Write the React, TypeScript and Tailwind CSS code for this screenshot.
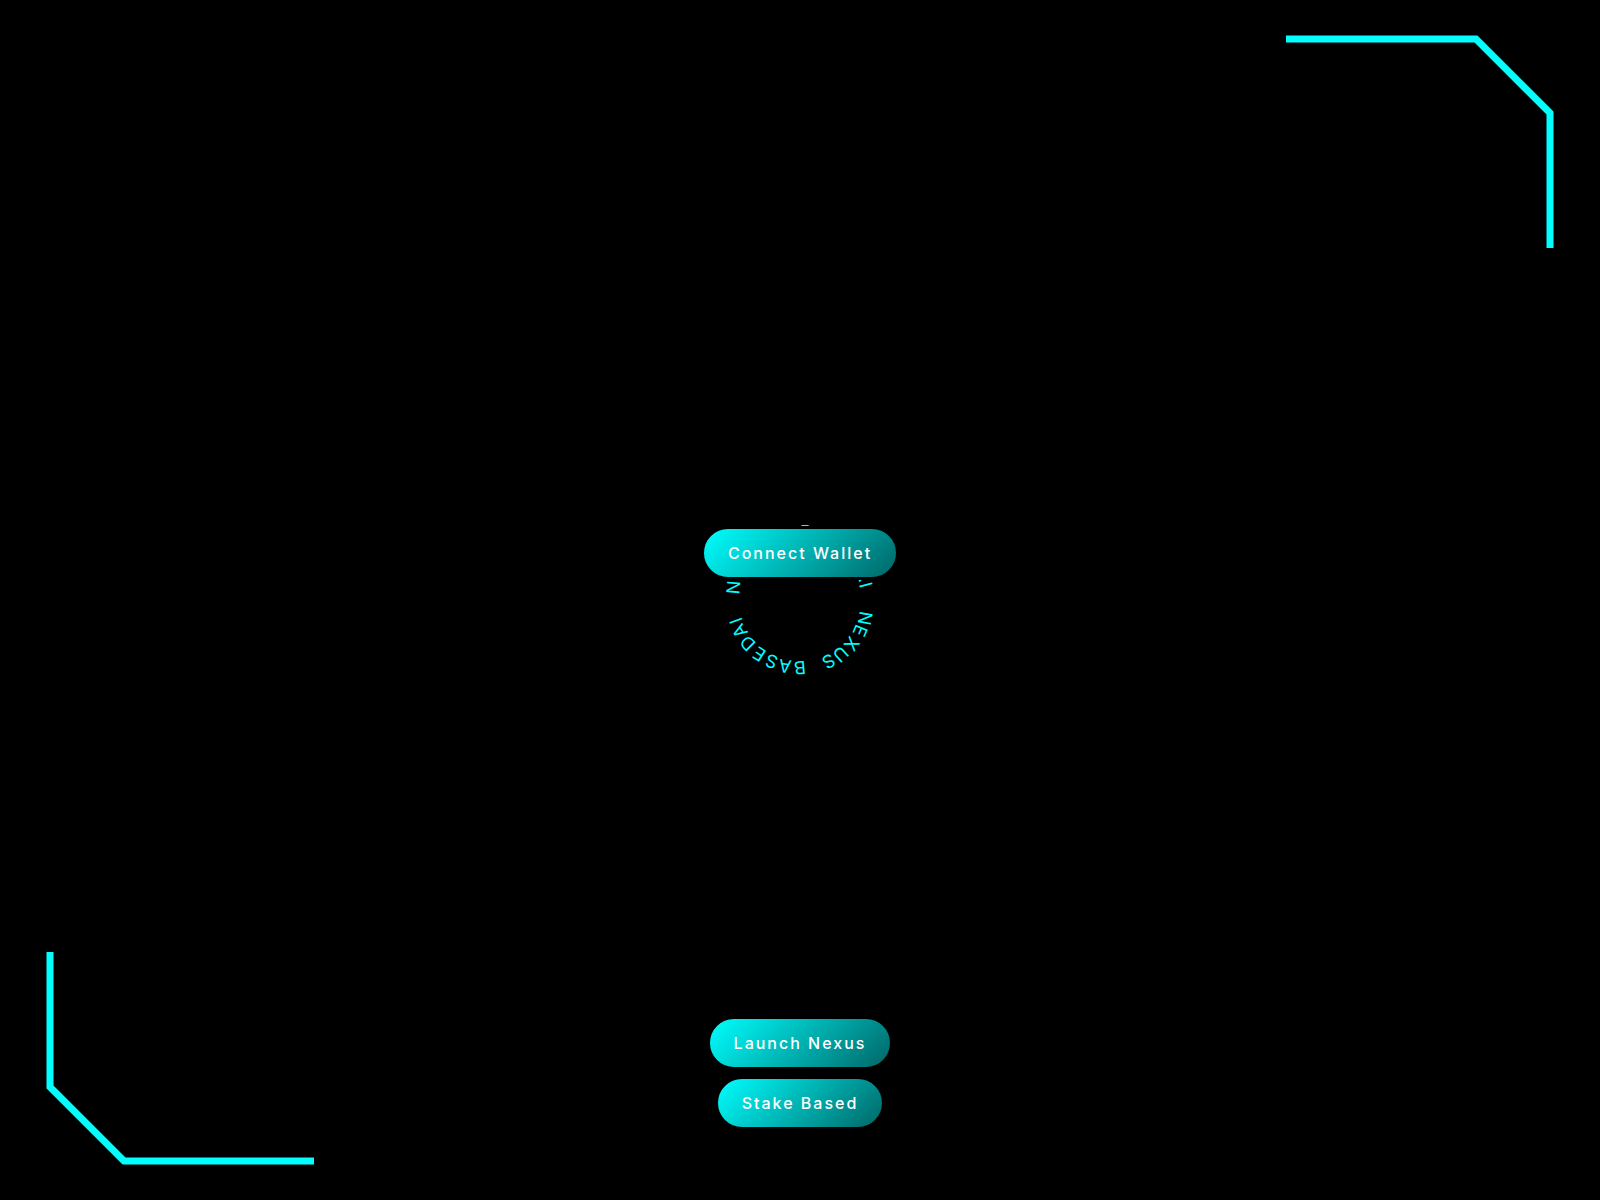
const RING_TEXT = 'BASEDAI NEXUS BASEDAI NEXUS ';
const RING_STEP = 12.5;

const Corner = ({ className }: { className: string }) => (
  <svg className={className} width="268" height="213" viewBox="0 0 268 213" fill="none" aria-hidden="true">
    <path d="M0 4H190L264 78V213" stroke="#00ffff" strokeWidth="7" />
  </svg>
);

const NeonButton = ({ label }: { label: string }) => (
  <button
    type="button"
    className="cursor-pointer rounded-full border-3 border-black bg-[linear-gradient(135deg,#00ffff,#006666)] px-6 py-3 text-base font-medium tracking-[2px] whitespace-nowrap text-white"
  >
    {label}
  </button>
);

const TextRing = () => (
  <div className="absolute inset-0 text-lg leading-[26px] text-[#00ffff]">
    {RING_TEXT.split('').map((char, i) => (
      <span
        key={i}
        className="absolute top-0 left-1/2 origin-[0_80px] whitespace-pre"
        style={{ transform: `rotate(${i * RING_STEP}deg)` }}
      >
        {char}
      </span>
    ))}
  </div>
);

export default function App() {
  return (
    <main className="relative grid min-h-screen grid-rows-[1fr_auto_1fr] justify-items-center overflow-hidden bg-black font-['Inter',sans-serif]">
      <Corner className="absolute top-[35px] right-[46px]" />
      <Corner className="absolute bottom-[35px] left-[46px] rotate-180" />

      <div className="relative row-start-2 flex size-40 justify-center pt-1.5">
        <TextRing />
        {/* sits on top of the ring */}
        <div className="relative">
          <NeonButton label="Connect Wallet" />
        </div>
      </div>

      <div className="row-start-3 flex flex-col items-center gap-1.5 self-end pb-[70px]">
        <NeonButton label="Launch Nexus" />
        <NeonButton label="Stake Based" />
      </div>
    </main>
  );
}
